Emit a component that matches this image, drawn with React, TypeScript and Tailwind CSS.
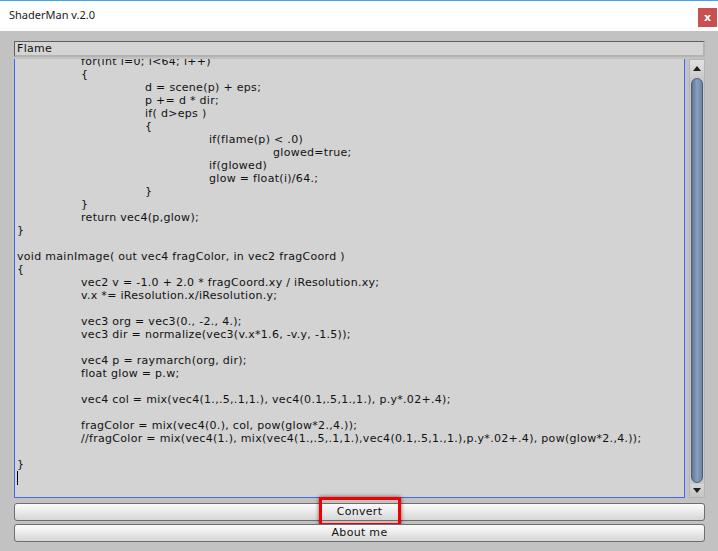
const code = `	for(int i=0; i<64; i++)
	{
		d = scene(p) + eps;
		p += d * dir;
		if( d>eps )
		{
			if(flame(p) < .0)
				glowed=true;
			if(glowed)
			glow = float(i)/64.;
		}
	}
	return vec4(p,glow);
}

void mainImage( out vec4 fragColor, in vec2 fragCoord )
{
	vec2 v = -1.0 + 2.0 * fragCoord.xy / iResolution.xy;
	v.x *= iResolution.x/iResolution.y;

	vec3 org = vec3(0., -2., 4.);
	vec3 dir = normalize(vec3(v.x*1.6, -v.y, -1.5));

	vec4 p = raymarch(org, dir);
	float glow = p.w;

	vec4 col = mix(vec4(1.,.5,.1,1.), vec4(0.1,.5,1.,1.), p.y*.02+.4);

	fragColor = mix(vec4(0.), col, pow(glow*2.,4.));
	//fragColor = mix(vec4(1.), mix(vec4(1.,.5,.1,1.),vec4(0.1,.5,1.,1.),p.y*.02+.4), pow(glow*2.,4.));

}`;

// one tab = 64px in the editor
const indentClass = ["pl-0", "pl-[64px]", "pl-[128px]", "pl-[192px]", "pl-[256px]"];

const lines = code.split("\n").map((raw) => {
  const text = raw.replace(/^\t+/, "");
  return { depth: raw.length - text.length, text };
});

function ScrollBar() {
  return (
    <div className="w-[16px] flex flex-col bg-[#c9c9c9] border border-[#b5b5b5]">
      <div className="h-[17px] flex items-center justify-center bg-gradient-to-b from-[#e2e2e2] to-[#cbcbcb]">
        <svg width="8" height="5" viewBox="0 0 8 5">
          <path d="M0 5 L4 0 L8 5 Z" fill="#1e1e1e" />
        </svg>
      </div>
      <div className="flex-1 px-[1px] py-[1px]">
        <div className="h-full rounded-full border border-[#4e5f78] bg-gradient-to-r from-[#5e7699] via-[#8aa0bf] to-[#6c83a5]" />
      </div>
      <div className="h-[13px] flex items-center justify-center bg-gradient-to-b from-[#d6d6d6] to-[#c5c5c5]">
        <svg width="8" height="5" viewBox="0 0 8 5">
          <path d="M0 0 L8 0 L4 5 Z" fill="#1e1e1e" />
        </svg>
      </div>
    </div>
  );
}

function Button({ label, children }: { label: string; children?: React.ReactNode }) {
  return (
    <button className="relative h-[18px] w-full rounded-[3px] border border-[#6e6e6e] bg-gradient-to-b from-[#fdfdfd] to-[#d6d6d6] text-[11px] leading-[16px] tracking-[0.3px] text-[#111]">
      {label}
      {children}
    </button>
  );
}

export default function App() {
  return (
    <div className="w-[718px] h-[551px] flex flex-col bg-[#c2c2c2] font-['DejaVu_Sans',sans-serif] overflow-hidden">
      <div className="h-[31px] shrink-0 flex items-start justify-between bg-white border-t border-[#3ea3f0]">
        <span className="pl-[9px] pt-[6px] text-[11px] leading-[16px] text-[#1a1a1a] font-['Noto_Sans',sans-serif]">
          ShaderMan v.2.0
        </span>
        <div className="mt-[7px] mr-[1px] w-[19px] h-[19px] bg-[#c75050] flex items-center justify-center text-white text-[11px] font-bold leading-none">
          x
        </div>
      </div>

      <div className="flex-1 flex flex-col pl-[14px] pr-[13px] pt-[10px]">
        <div className="h-[16px] w-[691px] bg-[#d4d4d4] border-t border-l border-[#5e5e5e] border-r-2 border-r-[#b3b3b3] border-b-2 border-b-[#b3b3b3] text-[11px] leading-[13px] tracking-[0.3px] pl-[2px] text-[#111]">
          Flame
        </div>

        <div className="flex gap-[4px] mt-[2px] h-[439px]">
          <div className="w-[677px] h-full bg-[#d3d3d3] border-l border-r border-b border-[#4566f0] overflow-hidden">
            <div className="-mt-[4px] pl-[2px] text-[11px] leading-[13px] tracking-[0.3px] text-[#111]">
              {lines.map((line, i) => (
                <div key={i} className={`h-[13px] whitespace-pre ${indentClass[line.depth]}`}>
                  {line.text}
                </div>
              ))}
              <div className="h-[13px]">
                <span className="block w-px h-[14px] bg-black" />
              </div>
            </div>
          </div>
          <ScrollBar />
        </div>

        <div className="w-[691px] flex flex-col gap-[3px] mt-[5px]">
          <Button label="Convert">
            <span className="absolute left-1/2 -ml-[41px] -top-[7px] w-[82px] h-[29px] border-[3px] border-[#f00000] shadow-[0_0_4px_rgba(0,0,0,0.6)]" />
          </Button>
          <Button label="About me" />
        </div>
      </div>
    </div>
  );
}
